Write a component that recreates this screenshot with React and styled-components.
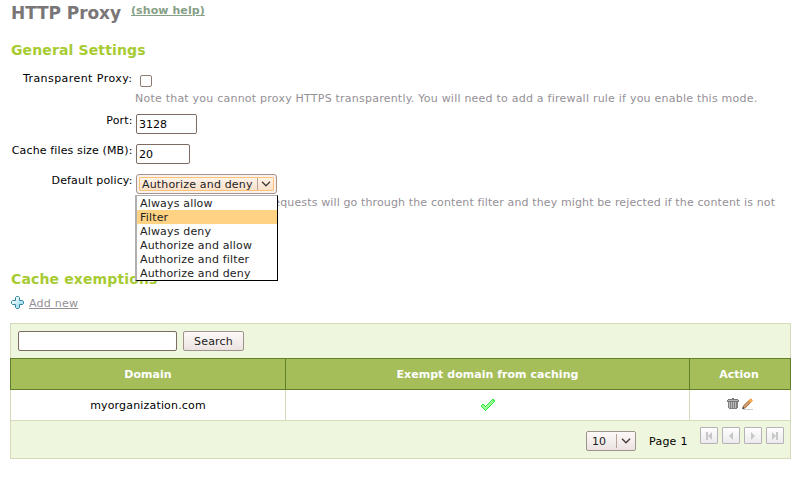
import React from "react";
import styled, { createGlobalStyle, css } from "styled-components";

const Global = createGlobalStyle`
  * { box-sizing: border-box; }
  body { margin: 0; background: #fff; color: #000; font: 11px/14px "DejaVu Sans", sans-serif; overflow: hidden; }
  input, button { font: inherit; color: inherit; letter-spacing: inherit; }
`;

const Page = styled.main`width: 804px; height: 485px; padding: 0 13px 0 10px; overflow: hidden;`;
const TitleBar = styled.header`display: flex; height: 40px; padding: 2px 0 0 1px;`;
const Title = styled.h1`margin: 0; width: 120px; font-size: 17px; line-height: 22px; letter-spacing: -0.08px; color: #7a7576; white-space: nowrap;`;
const HelpLink = styled.a`margin-top: 2px; height: 14px; font-weight: bold; letter-spacing: 0.08px; color: #86a086; text-decoration: underline; white-space: nowrap;`;
const SectionTitle = styled.h2`margin: 0; padding-left: 1px; font-size: 14px; line-height: 20px; height: 20px; letter-spacing: 0.13px; color: #a7cb32; white-space: nowrap;`;

const Form = styled.form`height: 209px; padding-top: 7px;`;
const Row = styled.div`display: grid; grid-template-columns: 122px 1fr; column-gap: 3px; height: ${(p) => p.$height}px; padding-top: 4px;`;
const Label = styled.label`
  display: flex; justify-content: flex-end; margin-right: -0.5px; white-space: nowrap;
  letter-spacing: ${(p) => p.$spacing || 0.13}px; padding-top: ${(p) => p.$drop || 0}px;
`;
const Field = styled.div`position: relative;`;
const Hint = styled.p`
  margin: 0; color: #949096; white-space: nowrap; padding-top: ${(p) => p.$gap}px;
  letter-spacing: ${(p) => p.$spacing}px; text-indent: ${(p) => p.$indent || 0}px;
`;
const Check = styled.input`
  appearance: none; display: block; width: 12px; height: 12px; margin: 4px 0 0 5px;
  border: 1px solid #8c7c72; border-radius: 2px; background: #fff;
`;
const TextInput = styled.input`
  display: block; width: ${(p) => p.$width}px; height: 20px; margin: 0 0 0 ${(p) => p.$indent || 0}px; padding: 1px 2px 0;
  border: 1px solid #7c6c62; border-radius: 2px; background: #fff; outline: none;
`;
const Select = styled.div`
  display: flex; width: 141px; height: 20px; margin-left: 1px; padding: 2px;
  border: 1px solid #a5938b; border-radius: 3px; background: #f8f1ee;
`;
const SelectFace = styled.div`
  display: flex; flex: 1; border: 1px solid #fdc377; border-radius: 1px; height: 14px;
  background: linear-gradient(#fff3e8, #fae0ca); padding-left: 2px; color: #222; line-height: 13px; letter-spacing: 0.17px; white-space: nowrap;
`;
const Arrow = styled.span`
  display: flex; align-items: center; justify-content: center; margin-left: auto;
  width: ${(p) => p.$width}px; height: ${(p) => p.$height}px; border-left: 1px solid #b5a49a; flex: none;
`;
const Menu = styled.ul`
  position: absolute; z-index: 2; left: 0; top: 21px; width: 143px; height: 86px; margin: 0; padding: 0; list-style: none;
  background: #fff; border: 1px solid #000; border-left: 2px solid #b0b0b0; border-top-color: #b0b0b0;
`;
const Option = styled.li`height: 14px; line-height: 16px; padding-left: 3px; letter-spacing: 0.17px; color: #222; background: ${(p) => (p.$active ? "#ffd284" : "transparent")};`;

const AddLink = styled.a`
  display: flex; gap: 5px; height: 14px; margin: 7px 0 13px 1px; color: #949096; letter-spacing: 0.25px;
  span { padding-top: 1px; text-decoration: underline; }
`;

const Panel = styled.section`width: 781px; height: 136px; border: 1px solid #d5dbb8; background: #eef6de;`;
const SearchBar = styled.form`display: flex; gap: 6px; height: 34px; padding: 7px;`;
const buttonLook = css`border: 1px solid #9e928c; border-radius: 2px; background: linear-gradient(#fdf9f8, #ece3e1);`;
const Button = styled.button`${buttonLook} width: 61px; height: 20px; padding: 2px 0 0; color: #222; letter-spacing: 0.17px;`;
const Table = styled.div`display: grid; grid-template-columns: 275px 404px 102px; margin: 0 -1px;`;
const HeadCell = styled.div`
  display: flex; align-items: center; justify-content: center; height: 32px; padding-top: 2px; font-weight: bold; color: #fff; background: #a5be5a;
  letter-spacing: 0.03px; border: 1px solid #5e8029; border-right-width: 0;
  &:nth-child(3) { border-right-width: 1px; padding-right: 2px; }
`;
const Cell = styled.div`
  display: flex; align-items: center; justify-content: center; gap: 3px; height: 31px; padding-top: ${(p) => p.$drop || 0}px; background: #fff;
  letter-spacing: 0.17px; border: solid #d5dbb8; border-width: 0 0 1px 1px;
  &:last-child { border-right-width: 1px; padding: 0 1px 2px 0; }
`;
const Footer = styled.footer`display: flex; padding-left: 575px; height: 37px;`;
const PageSize = styled.div`
  ${buttonLook} display: flex; align-items: center; width: 50px; height: 20px; margin-top: 10px; padding-left: 5px; color: #222;
  span:first-child { padding-top: 1px; }
`;
const PageText = styled.span`width: 51px; margin: 14px 0 0 13px; letter-spacing: 0.25px; white-space: nowrap;`;
const Pager = styled.nav`display: flex; gap: 4px; padding-top: 6px;`;
const PageButton = styled.button`
  display: flex; align-items: center; justify-content: center; width: 18px; height: 17px; padding: 0;
  border: 1px solid #b7b2b7; border-radius: 1px; background: linear-gradient(#fff, #eceaec);
`;

const Chevron = () => (
  <svg width="10" height="6" viewBox="0 0 10 6"><path d="M1 .8 5 4.8 9 .8" fill="none" stroke="#403936" strokeWidth="1.3" /></svg>
);
const Plus = () => (
  <svg width="13" height="13" viewBox="0 0 13 13">
    <defs><linearGradient id="plus" x2="1" y2="1"><stop offset=".2" stopColor="#f4fcfe" /><stop offset="1" stopColor="#79cfe6" /></linearGradient></defs>
    <path d="M5.5.5h2l1 1v3h3l1 1v2l-1 1h-3v3l-1 1h-2l-1-1v-3h-3l-1-1v-2l1-1h3v-3z" fill="url(#plus)" stroke="#2c879c" />
  </svg>
);
const Tick = () => (
  <svg width="14" height="12" viewBox="0 0 14 12" shapeRendering="crispEdges">
    <path d="M11 0h2v1h1v2h-1v1h-1v1h-1v1h-1v1H9v1H8v1H7v1H6v1H5v1H4v-1H3v-1H2V9H1V8H0V6h1V5h2v1h1v1h1V6h1V5h1V4h1V3h1V2h1V1h1z" fill="#2fe93b" />
    <path d="M11 1h1v1h1v1h-1v1h-1v1h-1v1H9v1H8v1H7v1H6v1H5v1H4v-1H3V9H2V8H1V6h2v1h1v1h1V7h1V6h1V5h1V4h1V3h1V2h1z" fill="#9af79a" />
  </svg>
);
const Trash = () => (
  <svg width="12" height="12" viewBox="0 0 12 12" shapeRendering="crispEdges">
    <path d="M5 0h2v1h4v1h1v2H0V2h1V1h4z" fill="#777" />
    <path d="M1 2h10v1H1z" fill="#b5b5b5" />
    <path d="M1 4h10v6h-1v1H2v-1H1z" fill="#808080" />
    <path d="M2 4h1v6H2zM4 4h1v6H4zM6 4h1v6H6zM8 4h1v6H8z" fill="#bbb" />
  </svg>
);
const Pencil = () => (
  <svg width="11" height="12" viewBox="0 0 11 12">
    <path d="M1 11.5h10" stroke="#ccc" />
    <path d="M.8 10.5 1.6 7.7 6.5 3l1.8 1.8-4.9 5z" fill="#d8a16c" stroke="#8f6038" strokeWidth=".9" />
    <path d="m6.5 3 2.2-2.2 1.8 1.8-2.2 2.2z" fill="#ffb34c" stroke="#e98427" strokeWidth=".8" />
    <path d="m.3 11 .7-2 1.4 1.3z" fill="#333" />
  </svg>
);
const pagerShapes = [
  "M3 1h2v8H3zM9 1v8L5 5z",
  "M8 1v8L4 5z",
  "M4 1v8l4-4z",
  "M3 1v8l4-4zM7 1h2v8H7z",
];
const pagerNames = ["First page", "Previous page", "Next page", "Last page"];
const policies = ["Always allow", "Filter", "Always deny", "Authorize and allow", "Authorize and filter", "Authorize and deny"];

export default function App() {
  return (
    <>
      <Global />
      <Page>
        <TitleBar><Title>HTTP Proxy</Title><HelpLink>(show help)</HelpLink></TitleBar>
        <SectionTitle>General Settings</SectionTitle>
        <Form>
          <Row $height={43}>
            <Label $spacing={0.44} $drop={1}>Transparent Proxy:</Label>
            <Field><Check type="checkbox" /><Hint $gap={5} $spacing={0.225}>Note that you cannot proxy HTTPS transparently. You will need to add a firewall rule if you enable this mode.</Hint></Field>
          </Row>
          <Row $height={30}>
            <Label>Port:</Label>
            <Field><TextInput $width={61} $indent={1} defaultValue="3128" /></Field>
          </Row>
          <Row $height={30}>
            <Label>Cache files size (MB):</Label>
            <Field><TextInput $width={54} $indent={1} defaultValue="20" /></Field>
          </Row>
          <Row $height={60}>
            <Label>Default policy:</Label>
            <Field>
              <Select><SelectFace>Authorize and deny<Arrow $width={16} $height={12}><Chevron /></Arrow></SelectFace></Select>
              <Menu>{policies.map((p) => <Option key={p} $active={p === "Filter"}>{p}</Option>)}</Menu>
              <Hint $gap={2} $spacing={0.13} $indent={2.3}>Filter means that HTTP requests will go through the content filter and they might be rejected if the content is not</Hint>
            </Field>
          </Row>
        </Form>
        <SectionTitle>Cache exemptions</SectionTitle>
        <AddLink><Plus /><span>Add new</span></AddLink>
        <Panel>
          <SearchBar><TextInput $width={159} aria-label="Search" /><Button type="button">Search</Button></SearchBar>
          <Table>
            <HeadCell>Domain</HeadCell><HeadCell>Exempt domain from caching</HeadCell><HeadCell>Action</HeadCell>
            <Cell $drop={2}>myorganization.com</Cell><Cell><Tick /></Cell><Cell><Trash /><Pencil /></Cell>
          </Table>
          <Footer>
            <PageSize><span>10</span><Arrow $width={19} $height={14}><Chevron /></Arrow></PageSize>
            <PageText>Page 1</PageText>
            <Pager>
              {pagerShapes.map((d, i) => (
                <PageButton key={d} aria-label={pagerNames[i]}><svg width="12" height="10" viewBox="0 0 12 10"><path d={d} fill="#c9c6c9" /></svg></PageButton>
              ))}
            </Pager>
          </Footer>
        </Panel>
      </Page>
    </>
  );
}
